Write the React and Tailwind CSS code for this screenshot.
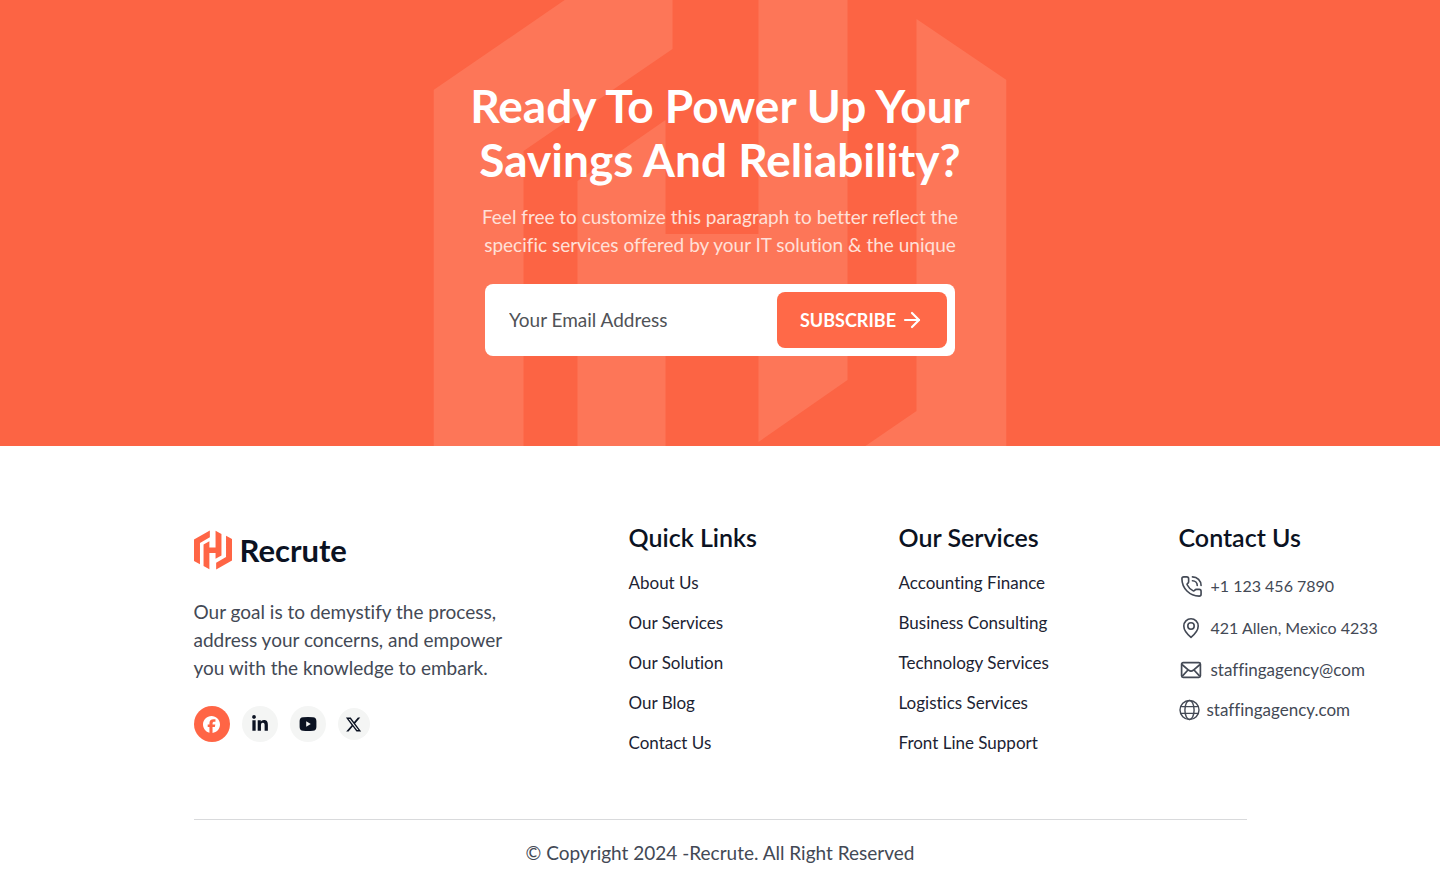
import { ArrowRight, PhoneCall } from "lucide-react";
import { FaFacebook, FaLinkedinIn, FaXTwitter } from "react-icons/fa6";

const MARK =
  "M434 90 673 -74V49L524 151V543L434 482Z M578 181 666 120V234H759V-72L848 -10V380L759 442V336H666V634L578 572Z M917 19 1007 80V472L768 636V513L917 411Z";

const quickLinks = ["About Us", "Our Services", "Our Solution", "Our Blog", "Contact Us"];
const services = [
  "Accounting Finance",
  "Business Consulting",
  "Technology Services",
  "Logistics Services",
  "Front Line Support",
];

function YoutubeIcon() {
  return (
    <svg viewBox="0 0 18 14" className="h-[14px] w-[18px]" fill="currentColor" aria-hidden="true">
      <path
        fillRule="evenodd"
        d="M4 0.3Q9 -0.2 14 0.3Q17.3 0.5 17.4 4V10Q17.3 13.5 14 13.7Q9 14.2 4 13.7Q0.7 13.5 0.6 10V4Q0.7 0.5 4 0.3ZM7.2 4.2V9.8L11.8 7Z"
      />
    </svg>
  );
}

function PinIcon() {
  return (
    <svg viewBox="0 0 22 22" className="size-[22px]" fill="none" stroke="currentColor" strokeWidth="1.6" aria-hidden="true">
      <path d="M11 20.3C8.7 18.4 3.8 13.9 3.8 9a7.2 7.2 0 0 1 14.4 0c0 4.9-4.9 9.4-7.2 11.3Z" strokeLinejoin="round" />
      <circle cx="11" cy="9" r="3.2" />
    </svg>
  );
}

function MailIcon() {
  return (
    <svg viewBox="0 0 22 22" className="size-[22px]" fill="none" stroke="currentColor" strokeWidth="1.7" strokeLinejoin="round" aria-hidden="true">
      <rect x="1.6" y="3.6" width="18.8" height="14.8" rx="1.6" />
      <path d="M2 5.5 8.8 11.3Q11 12.8 13.2 11.3L20 5.5M2.3 17.2 8 11M19.7 17.2 14 11" />
    </svg>
  );
}

function GlobeIcon() {
  return (
    <svg viewBox="0 0 22 22" className="size-[22px]" fill="none" stroke="currentColor" strokeWidth="1.4" aria-hidden="true">
      <circle cx="10.5" cy="11" r="9.5" />
      <ellipse cx="10.5" cy="11" rx="4.6" ry="9.5" />
      <path d="M1.8 7.6H19.2M1.8 14.4H19.2" />
    </svg>
  );
}

function LinkColumn({ title, items, className }) {
  return (
    <nav aria-label={title} className={className}>
      <h2 className="text-[25px] leading-[30px] font-semibold text-[#0b1222]">{title}</h2>
      <ul className="mt-[11px]">
        {items.map((item) => (
          <li key={item} className="flex h-10 items-center">
            <a href="#" className="text-[17px] leading-6 text-[#1c2333]">{item}</a>
          </li>
        ))}
      </ul>
    </nav>
  );
}

export default function App() {
  return (
    <div className="min-h-screen overflow-x-hidden bg-white font-['Lato',sans-serif] [font-variant-ligatures:none]">
      <section className="relative overflow-hidden bg-[#fc6444] px-4 pt-[79px] pb-[90px]">
        <svg
          viewBox="434 0 573 446"
          className="absolute top-0 left-1/2 h-full w-[573px] -translate-x-1/2"
          aria-hidden="true"
        >
          <path d={MARK} fill="#fd7658" />
        </svg>
        <div className="relative flex flex-col items-center text-center">
          <h1 className="text-[46px] leading-[54px] font-bold text-white">
            Ready To Power Up Your
            <br />
            Savings And Reliability?
          </h1>
          <p className="mt-4 text-[19px] leading-7 text-[#ffe0d8]">
            Feel free to customize this paragraph to better reflect the
            <br />
            specific services offered by your IT solution &amp; the unique
          </p>
          <form
            className="mt-[25px] flex w-full max-w-[470px] rounded-lg bg-white p-2"
            onSubmit={(e) => e.preventDefault()}
          >
            <input
              type="email"
              aria-label="Your Email Address"
              placeholder="Your Email Address"
              className="min-w-0 flex-1 px-4 text-[19px] text-[#505257] outline-none placeholder:text-[#505257]"
            />
            <button
              type="submit"
              className="flex h-14 w-[170px] items-center justify-center gap-1 rounded-lg bg-[#ff6948] text-[18px] font-bold text-white"
            >
              SUBSCRIBE
              <ArrowRight className="size-6" strokeWidth={2.2} />
            </button>
          </form>
        </div>
      </section>

      <footer className="mx-auto max-w-[1053px] pt-[76px]">
        <div className="flex h-[297px] items-start">
          <div className="w-[435px] shrink-0 pt-2">
            <a href="#" className="flex items-center gap-2">
              <svg viewBox="434 -84 573 730" preserveAspectRatio="none" className="h-10 w-[38px]" aria-hidden="true">
                <path d={MARK} fill="#ff6545" />
              </svg>
              <span className="text-[31px] leading-10 font-bold text-[#0b1222]">Recrute</span>
            </a>
            <p className="mt-7 text-[19px] leading-7 text-[#434955]">
              Our goal is to demystify the process,
              <br />
              address your concerns, and empower
              <br />
              you with the knowledge to embark.
            </p>
            <div className="mt-6 flex items-center gap-3 text-[#0b1222]">
              <a href="#" aria-label="Facebook" className="flex size-9 items-center justify-center rounded-full bg-[#ff6545] text-white">
                <FaFacebook className="size-[17px]" />
              </a>
              <a href="#" aria-label="LinkedIn" className="flex size-9 items-center justify-center rounded-full bg-[#f4f5f4]">
                <FaLinkedinIn className="size-[18px]" />
              </a>
              <a href="#" aria-label="YouTube" className="flex size-9 items-center justify-center rounded-full bg-[#f4f5f4]">
                <YoutubeIcon />
              </a>
              <a href="#" aria-label="X" className="flex size-8 items-center justify-center rounded-full bg-[#f4f5f4]">
                <FaXTwitter className="size-[17px]" />
              </a>
            </div>
          </div>

          <LinkColumn title="Quick Links" items={quickLinks} className="w-[270px] shrink-0" />
          <LinkColumn title="Our Services" items={services} className="w-[280px] shrink-0" />

          <address className="shrink-0 not-italic text-[#434955]">
            <h2 className="text-[25px] leading-[30px] font-semibold text-[#0b1222]">Contact Us</h2>
            <ul className="mt-[13px] text-base whitespace-nowrap">
              <li className="flex h-[42px] items-center gap-2 pl-px">
                <PhoneCall className="size-[23px]" strokeWidth={1.7} />
                <a href="tel:+11234567890">+1 123 456 7890</a>
              </li>
              <li className="flex h-[42px] items-center gap-[9px] pl-px">
                <PinIcon />
                <span>421 Allen, Mexico 4233</span>
              </li>
              <li className="flex h-[42px] items-center gap-[9px] pl-px">
                <MailIcon />
                <a href="#" className="text-[17px]">staffingagency@com</a>
              </li>
              <li className="flex h-[38px] items-center gap-[6px]">
                <GlobeIcon />
                <a href="#" className="text-[17px]">staffingagency.com</a>
              </li>
            </ul>
          </address>
        </div>

        <div className="border-t border-[#d9dadc] pt-[19px] pb-[27px] text-center text-[19px] leading-7 text-[#434955]">
          © Copyright 2024 -Recrute. All Right Reserved
        </div>
      </footer>
    </div>
  );
}
